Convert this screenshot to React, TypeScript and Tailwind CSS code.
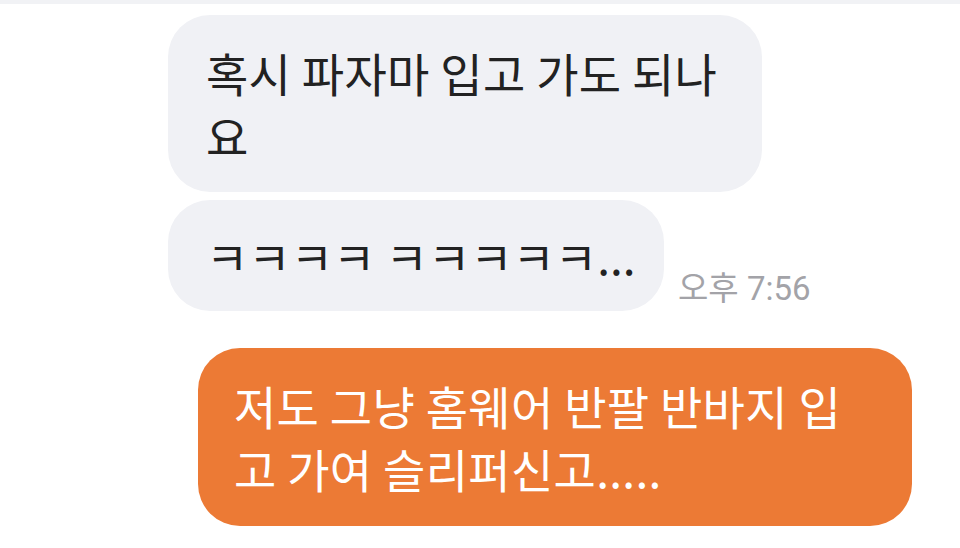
import React from "react";

export default function App() {
  const kr = { fontFamily: '"Noto Sans CJK KR", "Noto Sans", sans-serif' } as React.CSSProperties;
  return (
    <div className="w-[960px] h-[548px] overflow-hidden bg-white" style={kr}>
      <div className="h-[4px] bg-[#f1f2f5]" />
      <div className="flex flex-col pt-[11px]">
        <div className="ml-[168px] w-[594px] rounded-[42px] bg-[#f0f1f5] pl-[38px] pr-[20px] pt-[26px] pb-[25px] text-[46px] leading-[63px] tracking-[0.3px] text-[#222222]">
          혹시 파자마 입고 가도 되나
          <br />요
        </div>
        <div className="mt-[8px] ml-[168px] flex items-end gap-[14px]">
          <div className="w-[496px] rounded-[42px] bg-[#f0f1f5] pl-[38px] pr-[10px] py-[24px] text-[46px] leading-[63px] text-[#222222] whitespace-nowrap">
            ㅋㅋㅋㅋ ㅋㅋㅋㅋㅋ...
          </div>
          <div className="mb-[2px] text-[33px] leading-[40px] text-[#a3a3a8]" style={{ fontFamily: 'Roboto, "Noto Sans CJK KR", sans-serif' }}>
            오후 7:56
          </div>
        </div>
        <div className="mt-[37px] ml-[198px] w-[714px] rounded-[42px] bg-[#ec7a35] pl-[36px] pr-[20px] py-[26px] text-[46px] leading-[63px] tracking-[0.3px] text-white">
          저도 그냥 홈웨어 반팔 반바지 입
          <br />고 가여 슬리퍼신고.....
        </div>
      </div>
    </div>
  );
}
